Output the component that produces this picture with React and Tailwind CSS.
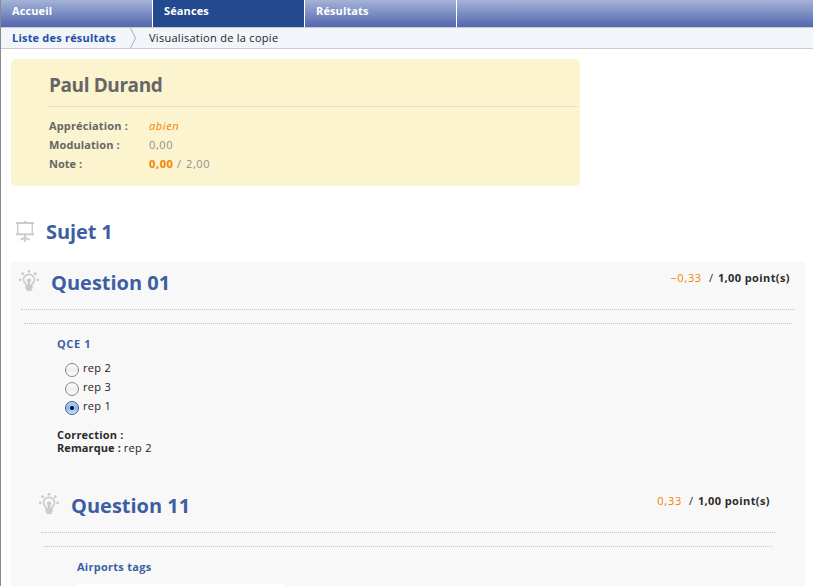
const dotted = 'border-t border-dotted border-[#c6c6c6]';

function BoardIcon() {
  return (
    <svg className="w-[18px] h-[21px] shrink-0" viewBox="0 0 18 21" fill="none" stroke="#cbcbcb">
      <path d="M0 2H18" strokeWidth="2" />
      <path d="M9 0V1" strokeWidth="2" />
      <path d="M1.7 3V13M16.3 3V13" strokeWidth="1.5" />
      <path d="M0 13.3H18" strokeWidth="2" />
      <path d="M9 14V21" strokeWidth="1.8" />
      <path d="M4.5 18.8L9 16.5L13.5 18.8" strokeWidth="2" />
    </svg>
  );
}

function BulbIcon() {
  return (
    <svg className="w-[20px] h-[21px] shrink-0" viewBox="0 0 20 21">
      <g fill="#cbcbcb">
        <circle cx="10" cy="1.3" r="1.4" />
        <circle cx="3.8" cy="3.8" r="1.45" />
        <circle cx="16.2" cy="3.8" r="1.45" />
        <circle cx="1.3" cy="9.8" r="1.35" />
        <circle cx="18.7" cy="9.8" r="1.35" />
        <circle cx="10" cy="10.6" r="2.2" />
        <path d="M9 11H11V15H9ZM6.4 14.4H13.6V18.8L12.6 19.4V21H7.4V19.4L6.4 18.8Z" />
      </g>
      <path d="M7.3 15.2C7.1 13.6 4.5 12.6 4.5 9.6A5.5 5.2 0 0 1 15.5 9.6C15.5 12.6 12.9 13.6 12.7 15.2" fill="none" stroke="#cbcbcb" strokeWidth="1.6" />
    </svg>
  );
}

function Radio({ label, checked }) {
  return (
    <div className="flex h-[19px] items-start">
      <span
        className={
          'mt-[3px] flex h-[14px] w-[14px] items-center justify-center rounded-full border ' +
          (checked
            ? 'border-[#4c5a92] bg-linear-to-b from-[#b5d2f3] via-[#83b9f0] to-[#c4f0ff]'
            : 'border-[#868686] bg-linear-to-b from-[#ffffff] via-[#ededed] to-[#ffffff]')
        }
      >
        {checked && <span className="h-[4px] w-[4px] rounded-full bg-[#050b1c]" />}
      </span>
      <span className="ml-[4px] leading-[15px] tracking-[0.3px]">{label}</span>
    </div>
  );
}

function QuestionHead({ title, score }) {
  return (
    <>
      <div className="flex h-[47px] items-start">
        <div className="-ml-[3px] mt-[8px]"><BulbIcon /></div>
        <h2 className="ml-[12px] mt-[6px] text-[20px] font-bold leading-[30px] text-[#3c5fa3]">{title}</h2>
        <div className="ml-auto mr-[5px] mt-[6px] flex leading-[20px]">
          <span className="tracking-[0.7px] text-[#f08300]">{score}</span>
          <span className="ml-[7px] w-[9px]">/</span>
          <b className="tracking-[0.4px] text-[#2b2b2b]">1,00 point(s)</b>
        </div>
      </div>
      <div className={'-ml-px ' + dotted} />
      <div className={'ml-[2px] mr-[3px] mt-[13px] ' + dotted} />
    </>
  );
}

export default function App() {
  return (
    <div className="h-[586px] w-[813px] overflow-hidden border-l border-[#8a8a8a] bg-white text-[11px] text-[#222222] [font-family:'Open_Sans','Noto_Sans',sans-serif]">
      <nav className="flex h-[27px] bg-linear-to-b from-[#a6b2d7] to-[#5267ad] font-bold leading-[22px] tracking-[0.12px] text-white">
        <a className="w-[152px] border-r border-white pl-[11px]">Accueil</a>
        <a className="w-[152px] border-r border-white bg-[#23498f] pl-[11px]">Séances</a>
        <a className="w-[152px] border-r border-white pl-[11px]">Résultats</a>
      </nav>
      <div className="flex h-[22px] border-y border-[#cccccc] bg-[#f2f6fb] leading-[20px]">
        <b className="w-[129px] pl-[11px] tracking-[0.2px] text-[#2450a0]">Liste des résultats</b>
        <svg className="h-[20px] w-[6px]" viewBox="0 0 6 20" fill="none" stroke="#aaaaaa">
          <path d="M0.5 0L5.5 10L0.5 20" />
        </svg>
        <span className="ml-[13px] tracking-[0.28px]">Visualisation de la copie</span>
      </div>

      <section className="ml-[10px] mt-[10px] h-[127px] w-[569px] rounded-[5px] bg-[#fcf4cf] pl-[38px] pr-[2px] text-[#666666]">
        <h1 className="h-[47px] pt-[10px] text-[19px] font-bold leading-[32px] tracking-[-0.4px]">Paul Durand</h1>
        <div className={dotted} />
        <dl className="mt-[9px] grid grid-cols-[100px_1fr] leading-[19px]">
          <dt className="font-bold tracking-[0.15px]">Appréciation :</dt>
          <dd className="italic tracking-[0.6px] text-[#f08300]">abien</dd>
          <dt className="font-bold tracking-[0.1px]">Modulation :</dt>
          <dd className="tracking-[0.6px] text-[#8f8f8f]">0,00</dd>
          <dt className="font-bold">Note :</dt>
          <dd className="flex tracking-[0.6px] text-[#8f8f8f]">
            <b className="w-[28px] text-[#f08300]">0,00</b>
            <span className="w-[9px]">/</span>
            <span>2,00</span>
          </dd>
        </dl>
      </section>

      <div className="ml-[15px] mt-[35px] flex h-[41px] items-start">
        <BoardIcon />
        <h2 className="ml-[12px] -mt-[4px] text-[20px] font-bold leading-[30px] tracking-[-0.1px] text-[#3c5fa3]">Sujet 1</h2>
      </div>

      <section className="ml-[10px] h-[324px] w-[794px] bg-[#f8f8f8] pl-[11px] pr-[10px]">
        <QuestionHead title="Question 01" score="−0,33" />
        <div className="ml-[35px] mt-[10px] h-[148px]">
          <h3 className="font-bold leading-[20px] tracking-[0.6px] text-[#3c5fa3]">QCE 1</h3>
          <div className="ml-[8px] mt-[6px]">
            <Radio label="rep 2" />
            <Radio label="rep 3" />
            <Radio label="rep 1" checked />
          </div>
          <div className="mt-[11px] leading-[13px]">
            <b className="block tracking-[0.2px] text-[#2b2b2b]">Correction :</b>
            <b className="tracking-[0.1px] text-[#2b2b2b]">Remarque :</b> <span className="tracking-[0.3px]">rep 2</span>
          </div>
        </div>
        <div className="mt-[3px] pl-[20px] pr-[20px]">
          <QuestionHead title="Question 11" score="0,33" />
          <div className="ml-[35px] mt-[10px]">
            <h3 className="font-bold leading-[20px] tracking-[0.27px] text-[#3c5fa3]">Airports tags</h3>
            <div className="mt-[7px] h-[20px] w-[208px] bg-white" />
          </div>
        </div>
      </section>
    </div>
  );
}
